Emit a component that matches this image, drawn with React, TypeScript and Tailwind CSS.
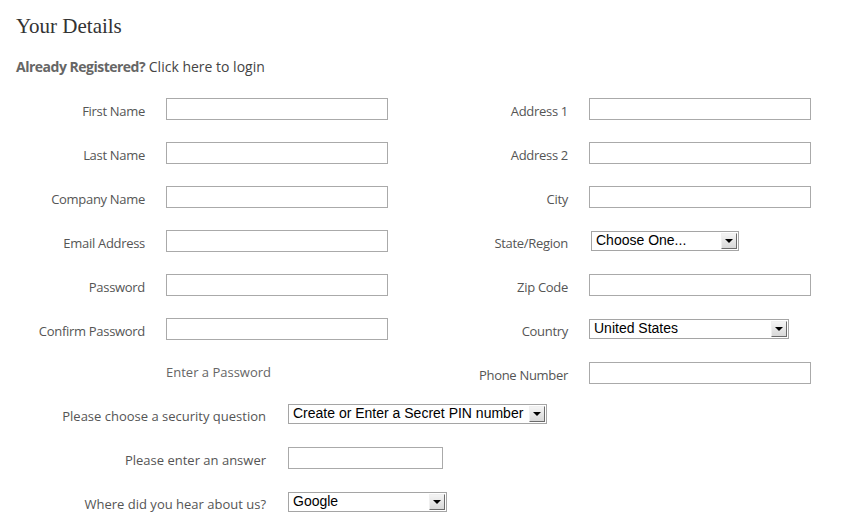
import React from 'react'

const labelFont = { fontFamily: '"Open Sans", "Noto Sans", sans-serif' }

const TextField = ({ width = 'w-[222px]' }: { width?: string }) => (
  <input
    type="text"
    className={`${width} h-[22px] border border-[#aaaaaa] bg-white px-1 text-[13px] outline-none`}
  />
)

// classic windows-style dropdown
const FakeSelect = ({ value, width }: { value: string; width: string }) => (
  <div
    className={`relative flex ${width} h-[20px] items-start border border-[#a5a5a5] bg-white`}
    role="combobox"
  >
    <span
      className="flex-1 truncate pl-[4px] text-[14px] leading-[17px] text-black"
      style={{ fontFamily: '"Liberation Sans", Arial, sans-serif' }}
    >
      {value}
    </span>
    <div className="mr-[1px] mt-[1px] flex h-[16px] w-[16px] items-center justify-center border border-t-[#f0f0f0] border-l-[#f0f0f0] border-r-[#6b6b6b] border-b-[#6b6b6b] bg-gradient-to-b from-[#f4f4f4] to-[#d8d8d8]">
      <div className="h-0 w-0 border-l-[4px] border-r-[4px] border-t-[4px] border-l-transparent border-r-transparent border-t-black" />
    </div>
  </div>
)

const Row = ({
  label,
  labelWidth,
  gap,
  tracking = 'tracking-[-0.3px]',
  children,
}: {
  label: string
  labelWidth: string
  gap: string
  tracking?: string
  children?: React.ReactNode
}) => (
  <div className={`flex h-[44px] items-center ${gap}`}>
    <label className={`${labelWidth} shrink-0 pt-[5px] text-right text-[13px] ${tracking} text-[#555555]`}>
      {label}
    </label>
    {children}
  </div>
)

export default function App() {
  return (
    <div className="min-h-screen w-[846px] bg-white pl-[16px] pt-[12px]" style={labelFont}>
      <h2
        className="text-[21px] leading-[28px] text-[#333333]"
        style={{ fontFamily: '"Liberation Serif", "Times New Roman", serif' }}
      >
        Your Details
      </h2>

      <p className="mt-[18px] text-[14px] leading-[18px] text-[#444444]">
        <span className="font-bold tracking-[-0.5px] text-[#666666]">Already Registered?</span> Click here to login
      </p>

      <div className="mt-[11px] flex">
        {/* left column */}
        <div className="flex w-[384px] shrink-0 flex-col">
          <Row label="First Name" labelWidth="w-[129px]" gap="gap-[21px]"><TextField /></Row>
          <Row label="Last Name" labelWidth="w-[129px]" gap="gap-[21px]"><TextField /></Row>
          <Row label="Company Name" labelWidth="w-[129px]" gap="gap-[21px]"><TextField /></Row>
          <Row label="Email Address" labelWidth="w-[129px]" gap="gap-[21px]"><TextField /></Row>
          <Row label="Password" labelWidth="w-[129px]" gap="gap-[21px]"><TextField /></Row>
          <Row label="Confirm Password" labelWidth="w-[129px]" gap="gap-[21px]"><TextField /></Row>
          <div className="flex h-[44px] items-center pl-[150px] text-[13px] text-[#666666]">
            Enter a Password
          </div>
        </div>

        {/* right column */}
        <div className="flex flex-col">
          <Row label="Address 1" labelWidth="w-[168px]" gap="gap-[21px]"><TextField /></Row>
          <Row label="Address 2" labelWidth="w-[168px]" gap="gap-[21px]"><TextField /></Row>
          <Row label="City" labelWidth="w-[168px]" gap="gap-[21px]"><TextField /></Row>
          <Row label="State/Region" labelWidth="w-[168px]" gap="gap-[23px]">
            <FakeSelect value="Choose One..." width="w-[148px]" />
          </Row>
          <Row label="Zip Code" labelWidth="w-[168px]" gap="gap-[21px]"><TextField /></Row>
          <Row label="Country" labelWidth="w-[168px]" gap="gap-[21px]">
            <FakeSelect value="United States" width="w-[200px]" />
          </Row>
          <Row label="Phone Number" labelWidth="w-[168px]" gap="gap-[21px]"><TextField /></Row>
        </div>
      </div>

      <div className="-mt-[3px] flex flex-col">
        <Row label="Please choose a security question" labelWidth="w-[250px]" gap="gap-[22px]" tracking="tracking-normal">
          <FakeSelect value="Create or Enter a Secret PIN number" width="w-[259px]" />
        </Row>
        <Row label="Please enter an answer" labelWidth="w-[250px]" gap="gap-[22px]" tracking="tracking-normal">
          <TextField width="w-[155px]" />
        </Row>
        <Row label="Where did you hear about us?" labelWidth="w-[250px]" gap="gap-[22px]" tracking="tracking-normal">
          <FakeSelect value="Google" width="w-[159px]" />
        </Row>
      </div>
    </div>
  )
}
